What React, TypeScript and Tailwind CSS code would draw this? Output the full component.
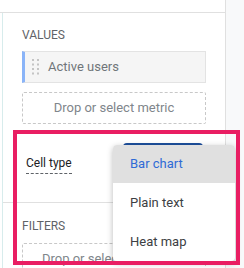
const font = { fontFamily: 'Roboto, "Liberation Sans", sans-serif' };

function DragDots() {
  return (
    <svg width="7" height="16" viewBox="0 0 7 16" className="shrink-0">
      {[0, 1, 2, 3].map((r) =>
        [0, 1].map((c) => (
          <rect key={`${r}-${c}`} x={c * 5} y={r * 4.5} width="2" height="2" fill="#c4c4c4" />
        ))
      )}
    </svg>
  );
}

export default function App() {
  return (
    <div
      className="relative w-[244px] h-[268px] overflow-hidden bg-[#f8f9fa] flex"
      style={font}
    >
      {/* Panel */}
      <div className="w-[226px] h-full bg-white border-r border-[#e0e0e0] flex flex-col">
        <div className="h-[13px] shrink-0 border-b border-[#e0e0e0]" />
        <div className="ml-[2px] flex-1 border-l border-[#d7ecec] flex flex-col">
          {/* Values */}
          <div className="px-[19px] h-[190px] shrink-0 border-b border-[#e0e0e0] flex flex-col">
            <div className="mt-[15px] text-[12px] leading-[14px] text-[#5f6368]">VALUES</div>
            <div className="mt-[9px] h-[32px] flex items-center gap-[9px] bg-[#f5f5f5] border border-[#e3e3e3] border-l-[3px] border-l-[#8ab4f8] pl-[7px]">
              <DragDots />
              <span className="text-[13px] text-[#70757a]">Active users</span>
            </div>
            <div className="mt-[9px] h-[32px] flex items-center justify-center border border-dashed border-[#c8c8c8] rounded-[2px] text-[13px] text-[#80868b]">
              Drop or select metric
            </div>
            <div className="mt-[15px] flex items-start justify-between pl-[4px] pr-[3px]">
              <span className="mt-[16px] text-[12px] leading-[16px] pb-[2px] border-b border-dashed border-[#5f6368] text-[#202124]">
                Cell type
              </span>
              <div className="mt-[4px] w-[80px] h-[32px] rounded-[4px] border-t-2 border-[#1d4f9c] bg-[#e8f0fe]" />
            </div>
          </div>
          {/* Filters */}
          <div className="px-[19px] flex flex-col">
            <div className="mt-[16px] text-[12px] leading-[14px] text-[#5f6368]">FILTERS</div>
            <div className="mt-[10px] h-[32px] flex items-center justify-center border border-dashed border-[#c8c8c8] rounded-[2px] text-[13px] text-[#80868b] whitespace-nowrap">
              Drop or select dimension
            </div>
          </div>
        </div>
      </div>

      {/* Dropdown menu */}
      <div className="absolute left-[113px] top-[145px] w-[122px] h-[116px] bg-white rounded-[4px] shadow-[0_2px_6px_rgba(0,0,0,0.28)] overflow-hidden text-[13px]">
        <div className="h-[38px] flex items-center pl-[17px] bg-[#e0e0e0] text-[#2f6bd6]">Bar chart</div>
        <div className="h-[39px] flex items-center pl-[17px] text-[#3c4043]">Plain text</div>
        <div className="h-[39px] flex items-center pl-[17px] text-[#3c4043]">Heat map</div>
      </div>

      {/* Highlight frame */}
      <div className="absolute left-[13px] top-[130px] w-[227px] h-[135px] border-[4px] border-[#e91e63] pointer-events-none" />
    </div>
  );
}
